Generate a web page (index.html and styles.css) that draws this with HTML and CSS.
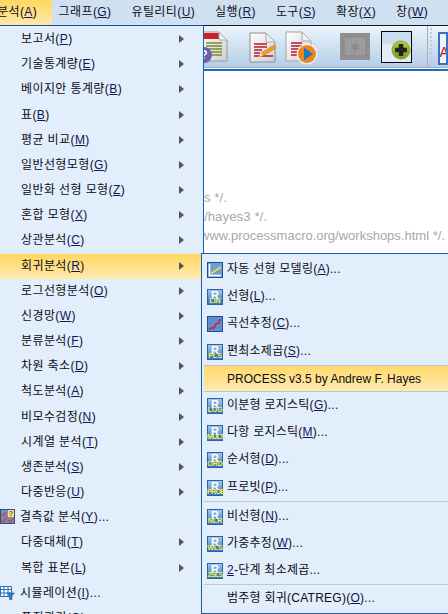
FILE: index.html
```html
<!DOCTYPE html>
<html lang="ko">
<head>
<meta charset="utf-8">
<title>SPSS 분석 메뉴</title>
<link rel="stylesheet" href="styles.css">
</head>
<body>
<div class="app">
  <svg class="defs" width="0" height="0">
    <defs>
      <linearGradient id="rbg" x1="0" y1="0" x2="0" y2="1"><stop offset="0" stop-color="#a9c8ea"/><stop offset=".6" stop-color="#5f97d6"/><stop offset="1" stop-color="#3f7cc4"/></linearGradient>
      <linearGradient id="pg" x1="0" y1="0" x2="1" y2="1"><stop offset="0" stop-color="#ffffff"/><stop offset="1" stop-color="#cfcfcf"/></linearGradient>
      <linearGradient id="gg" x1="0" y1="0" x2="0" y2="1"><stop offset="0" stop-color="#b5cc3c"/><stop offset="1" stop-color="#7d9c1e"/></linearGradient>
      <symbol id="rbase" viewBox="0 0 16 16">
        <rect x=".5" y=".5" width="15" height="15" fill="url(#rbg)" stroke="#2a63ac"/>
        <rect x="1" y="10" width="14" height="5" fill="#3a7cc8"/>
        <text class="rr" x="8" y="10">R</text>
      </symbol>
    </defs>
  </svg>

  <nav class="menubar">
    <span class="top top-active">분석(<u>A</u>)</span>
    <span class="top">그래프(<u>G</u>)</span>
    <span class="top">유틸리티(<u>U</u>)</span>
    <span class="top">실행(<u>R</u>)</span>
    <span class="top">도구(<u>S</u>)</span>
    <span class="top">확장(<u>X</u>)</span>
    <span class="top">창(<u>W</u>)</span>
  </nav>

  <div class="toolbar">
    <svg class="tool t-doc1" width="29" height="34" viewBox="0 0 29 34">
      <path d="M1 1H19L27 9V30H1Z" fill="url(#pg)" stroke="#9a9a9a"/>
      <path d="M1 2H20V8H1Z" fill="#c8202c"/>
      <path d="M19 1V9H27Z" fill="#efefef" stroke="#aaa"/>
      <path d="M6 12H22M6 15H22M6 18H22M10 21H22M12 24H22" stroke="#7a8a2a" stroke-width="1.4"/>
      <circle cx="4" cy="24" r="8" fill="#6a62ad"/>
      <text class="q" x="4" y="28">?</text>
    </svg>
    <svg class="tool t-doc2" width="28" height="32" viewBox="0 0 28 32">
      <path d="M1 1H17L26 10V30H1Z" fill="url(#pg)" stroke="#8d8d8d"/>
      <path d="M17 1V10H26Z" fill="#efefef" stroke="#aaa"/>
      <path d="M5 12H18M5 15H18M5 18H13M5 21H11M5 24H24" stroke="#b8182c" stroke-width="1.5"/>
      <path d="M12 21L25 13L27 16L14 24Z" fill="#f59a1e" stroke="#c56e10" stroke-width=".5"/>
      <path d="M12 21L14 24L10 25Z" fill="#f3dcae"/>
    </svg>
    <svg class="tool t-doc3" width="34" height="34" viewBox="0 0 34 34">
      <path d="M1 1H17L26 10V30H1Z" fill="url(#pg)" stroke="#a5a5a5"/>
      <path d="M17 1V10H26Z" fill="#efefef" stroke="#aaa"/>
      <path d="M6 12H17M6 15H17M6 18H14M6 21H12M6 24H12" stroke="#b8182c" stroke-width="1.5"/>
      <circle cx="22" cy="23" r="10.500" fill="#fff" opacity=".6"/>
      <circle cx="22" cy="23" r="9" fill="#ee861c"/>
      <path d="M19 16.500L28 23L19 29.500Z" fill="#1d79b8"/>
    </svg>
    <svg class="tool t-grey" width="30" height="27" viewBox="0 0 30 27">
      <rect width="30" height="27" fill="#909090"/>
      <rect x="4" y="4" width="22" height="19" fill="#9c9c9c" stroke="#858585"/>
      <path d="M15 8L16.500 12L20 11L18 14L20 17L16.500 16L15 20L13.500 16L10 17L12 14L10 11L13.500 12Z" fill="#8a8a8a"/>
    </svg>
    <div class="plus-box">
      <svg width="22" height="22" viewBox="0 0 22 22">
        <circle cx="11" cy="11" r="10" fill="url(#gg)" stroke="#8a9f2a"/>
        <path d="M8.500 4.500H13.500V8.500H17.500V13.500H13.500V17.500H8.500V13.500H4.500V8.500H8.500Z" fill="#222"/>
      </svg>
    </div>
    <div class="tb-sep"></div>
    <div class="grip"></div>
    <div class="a-box"><span>A</span></div>
  </div>
  <div class="blue-line"></div>

  <main class="editor">
    <div class="code">s */.</div>
    <div class="code">/hayes3 */.</div>
    <div class="code code-long">www.processmacro.org/workshops.html */.</div>
  </main>

  <ul class="menu main-menu">
    <li class="row">보고서(<u>P</u>)<i class="arrow"></i></li>
    <li class="row">기술통계량(<u>E</u>)<i class="arrow"></i></li>
    <li class="row">베이지안 통계량(<u>B</u>)<i class="arrow"></i></li>
    <li class="row">표(<u>B</u>)<i class="arrow"></i></li>
    <li class="row">평균 비교(<u>M</u>)<i class="arrow"></i></li>
    <li class="row">일반선형모형(<u>G</u>)<i class="arrow"></i></li>
    <li class="row">일반화 선형 모형(<u>Z</u>)<i class="arrow"></i></li>
    <li class="row">혼합 모형(<u>X</u>)<i class="arrow"></i></li>
    <li class="row">상관분석(<u>C</u>)<i class="arrow"></i></li>
    <li class="row row-hot">회귀분석(<u>R</u>)<i class="arrow"></i></li>
    <li class="row">로그선형분석(<u>O</u>)<i class="arrow"></i></li>
    <li class="row">신경망(<u>W</u>)<i class="arrow"></i></li>
    <li class="row">분류분석(<u>F</u>)<i class="arrow"></i></li>
    <li class="row">차원 축소(<u>D</u>)<i class="arrow"></i></li>
    <li class="row">척도분석(<u>A</u>)<i class="arrow"></i></li>
    <li class="row">비모수검정(<u>N</u>)<i class="arrow"></i></li>
    <li class="row">시계열 분석(<u>T</u>)<i class="arrow"></i></li>
    <li class="row">생존분석(<u>S</u>)<i class="arrow"></i></li>
    <li class="row">다중반응(<u>U</u>)<i class="arrow"></i></li>
    <li class="row row-ic">
      <svg class="mi" width="15" height="15" viewBox="0 0 15 15">
        <rect x=".5" y=".5" width="14" height="14" fill="#6f8fc4" stroke="#2a4f8c"/>
        <rect x="8" y="1" width="6" height="7" fill="#f2e860"/>
        <text class="q2" x="11" y="7">?</text>
        <path d="M1 5L3 7L6 3M1 11L3 13L7 8M8 11L10 13L14 9" fill="none" stroke="#d8402a" stroke-width="1.400"/>
      </svg>결측값 분석(<u>Y</u>)...
    </li>
    <li class="row">다중대체(<u>T</u>)<i class="arrow"></i></li>
    <li class="row">복합 표본(<u>L</u>)<i class="arrow"></i></li>
    <li class="row row-ic">
      <svg class="mi" width="15" height="15" viewBox="0 0 15 15">
        <path d="M.5 1.500H11.500V11.500H.5ZM.5 4.500H11.500M.5 8H11.500M4 1.500V11.500M8 1.500V11.500" fill="#fff" stroke="#2a6cb8"/>
        <path d="M7 8H14.500L12 11V14.500H9.500V11Z" fill="#2a7cc8" stroke="#1a4f8c" stroke-width=".5"/>
      </svg>시뮬레이션(<u>I</u>)...
    </li>
    <li class="row">품질관리(<u>Q</u>)<i class="arrow"></i></li>
  </ul>

  <ul class="menu sub-menu">
    <li class="sub">
      <svg class="si" width="16" height="16" viewBox="0 0 16 16"><rect x=".5" y=".5" width="15" height="15" fill="#6e9fdc" stroke="#1f4f96"/><path d="M2.500 2V13.500H14" fill="none" stroke="#fff" stroke-width="1.500"/><path d="M4 11.500L14 5" stroke="#f2d93a" stroke-width="2"/></svg>자동 선형 모델링(<u>A</u>)...
    </li>
    <li class="sub">
      <span class="ri"><svg width="16" height="16"><use href="#rbase"/></svg><b class="rt">LIN</b></span>선형(<u>L</u>)...
    </li>
    <li class="sub">
      <svg class="si" width="16" height="16" viewBox="0 0 16 16"><rect x=".5" y=".5" width="15" height="15" fill="#5c8fd0" stroke="#1f4f96"/><path d="M2 13.500L5 11.500L7 12L9 8L12 7L13 3" fill="none" stroke="#d0202a" stroke-width="1.600"/></svg>곡선추정(<u>C</u>)...
    </li>
    <li class="sub">
      <span class="ri"><svg width="16" height="16"><use href="#rbase"/></svg><b class="rt">PLS</b></span>편최소제곱(<u>S</u>)...
    </li>
    <li class="sub sub-hot">PROCESS v3.5 by Andrew F. Hayes</li>
    <li class="sub">
      <span class="ri"><svg width="16" height="16"><use href="#rbase"/></svg><b class="rt">LOG</b></span>이분형 로지스틱(<u>G</u>)...
    </li>
    <li class="sub">
      <span class="ri"><svg width="16" height="16"><use href="#rbase"/></svg><b class="rt rt-long">MULT</b></span>다항 로지스틱(<u>M</u>)...
    </li>
    <li class="sub">
      <span class="ri"><svg width="16" height="16"><use href="#rbase"/></svg><b class="rt">ORD</b></span>순서형(<u>D</u>)...
    </li>
    <li class="sub">
      <span class="ri"><svg width="16" height="16"><use href="#rbase"/></svg><b class="rt rt-long">PROB</b></span>프로빗(<u>P</u>)...
    </li>
    <li class="sep"></li>
    <li class="sub">
      <span class="ri"><svg width="16" height="16"><use href="#rbase"/></svg><b class="rt">NLR</b></span>비선형(<u>N</u>)...
    </li>
    <li class="sub">
      <span class="ri"><svg width="16" height="16"><use href="#rbase"/></svg><b class="rt">WLS</b></span>가중추정(<u>W</u>)...
    </li>
    <li class="sub">
      <span class="ri"><svg width="16" height="16"><use href="#rbase"/></svg><b class="rt rt-long">2SLS</b></span><u>2</u>-단계 최소제곱...
    </li>
    <li class="sep"></li>
    <li class="sub sub-last">범주형 회귀(CATREG)(<u>O</u>)...</li>
  </ul>
</div>
</body>
</html>
```
FILE: styles.css
```css
* { box-sizing: border-box; }
html, body { margin: 0; padding: 0; background: #fff; }
.app {
  position: relative;
  width: 448px;
  height: 614px;
  overflow: hidden;
  font-family: "Liberation Sans", "Noto Sans CJK KR", sans-serif;
  font-size: 12px;
  color: #0c0c14;
}
.defs { position: absolute; }
u { color: #14145a; text-underline-offset: 1px; }

.menubar {
  display: flex;
  height: 25px;
  margin-left: -10px;
  background: #cfe0f0;
  line-height: 25px;
  letter-spacing: .4px;
}
.top { padding: 0 10px; white-space: nowrap; }
.top-active { padding: 0 15px 0 7px; margin-right: -3.500px; background: linear-gradient(#ffd75f, #ffe9a8); }

.toolbar {
  display: flex;
  align-items: flex-start;
  height: 43px;
  padding-left: 200px;
  border-top: 1px solid #12161c;
  border-bottom: 1px solid #a9afb7;
  background: linear-gradient(#ecf4fc, #b4cee8);
}
.tool { flex: none; margin-top: 5px; }
.t-doc2 { margin-left: 20px; margin-top: 6px; }
.t-doc3 { margin-left: 8px; margin-top: 5px; }
.t-grey { margin-left: 21px; margin-top: 7px; }
.q { font: bold 12px "Liberation Sans", sans-serif; fill: #fff; text-anchor: middle; }
.q2 { font: bold 7px "Liberation Sans", sans-serif; fill: #a02aa0; text-anchor: middle; }
.rr { font: bold 11px "Liberation Sans", sans-serif; fill: #fff; text-anchor: middle; }
.plus-box {
  width: 32px;
  height: 32px;
  margin: 5px 0 0 11px;
  padding: 8px 0 0 9px;
  border: 1px solid #000;
  background: linear-gradient(#c9dcf0 0 40%, #e2edf9 40%);
}
.plus-box svg { display: block; margin: 0; width: 20px; height: 20px; }
.tb-sep { width: 1px; height: 41px; margin-left: 15px; background: #9fb0c2; }
.grip {
  width: 3px;
  height: 38px;
  margin: 2px 0 0 3px;
  background: repeating-linear-gradient(#c9c9c9 0 2px, transparent 2px 4px);
}
.a-box {
  width: 20px;
  height: 33px;
  margin: 6px 0 0 6px;
  border: 2px solid #3c70c0;
  background: #f0f4fa;
  color: #b02030;
  font-size: 14px;
  line-height: 36px;
  overflow: hidden;
}
.blue-line { height: 3px; border-bottom: 2px solid #1c6cbe; }

.editor { padding: 117px 0 0 204px; }
.code {
  height: 19px;
  font-size: 13.330px;
  line-height: 19px;
  color: #a8a8a8;
  white-space: nowrap;
}
.code-long { margin-left: -4px; font-size: 13px; }

.menu { position: absolute; margin: 0; padding: 0; list-style: none; background: #e2eefb; }
.main-menu {
  left: 0;
  top: 25px;
  width: 204px;
  height: 600px;
  padding-top: 1px;
  border-top: 1px solid #174f96;
  border-right: 1px solid #1a5ea8;
}
.row {
  position: relative;
  height: 25.180px;
  padding-left: 21px;
  line-height: 25px;
  letter-spacing: .4px;
  white-space: nowrap;
}
.row-hot { background: linear-gradient(#ffd75f, #ffeab0); }
.row-ic { padding-left: 20px; }
.arrow {
  position: absolute;
  left: 179px;
  top: 8px;
  border-style: solid;
  border-width: 4.500px 0 4.500px 5px;
  border-color: transparent transparent transparent #555;
}
.mi { position: absolute; left: 0; top: 4px; }

.sub-menu {
  left: 201px;
  top: 253px;
  width: 260px;
  height: 361px;
  padding: 2px 0 0 2px;
  border: 1px solid #1a5ea8;
}
.sub {
  position: relative;
  height: 27.200px;
  padding-left: 23px;
  line-height: 27px;
  letter-spacing: .25px;
  white-space: nowrap;
}
.sub-hot {
  border-top: 1px solid #bcc4d2;
  border-bottom: 1px solid #bcc4d2;
  background: linear-gradient(#ffd96b, #ffeab0);
  letter-spacing: 0;
}
.sub-last { margin-top: -1px; }
.sep { height: 2px; margin: 0; background: #c2c8d0; border-bottom: 1px solid #e2eefb; }
.si, .ri { position: absolute; left: 3px; top: 6px; width: 16px; height: 16px; }
.ri svg { display: block; }
.rt {
  position: absolute;
  left: 0;
  right: 0;
  bottom: 1px;
  font-size: 7px;
  line-height: 6px;
  text-align: center;
  font-weight: bold;
  color: #fbf33c;
  letter-spacing: 0;
}
.rt-long { letter-spacing: -.6px; }
```
